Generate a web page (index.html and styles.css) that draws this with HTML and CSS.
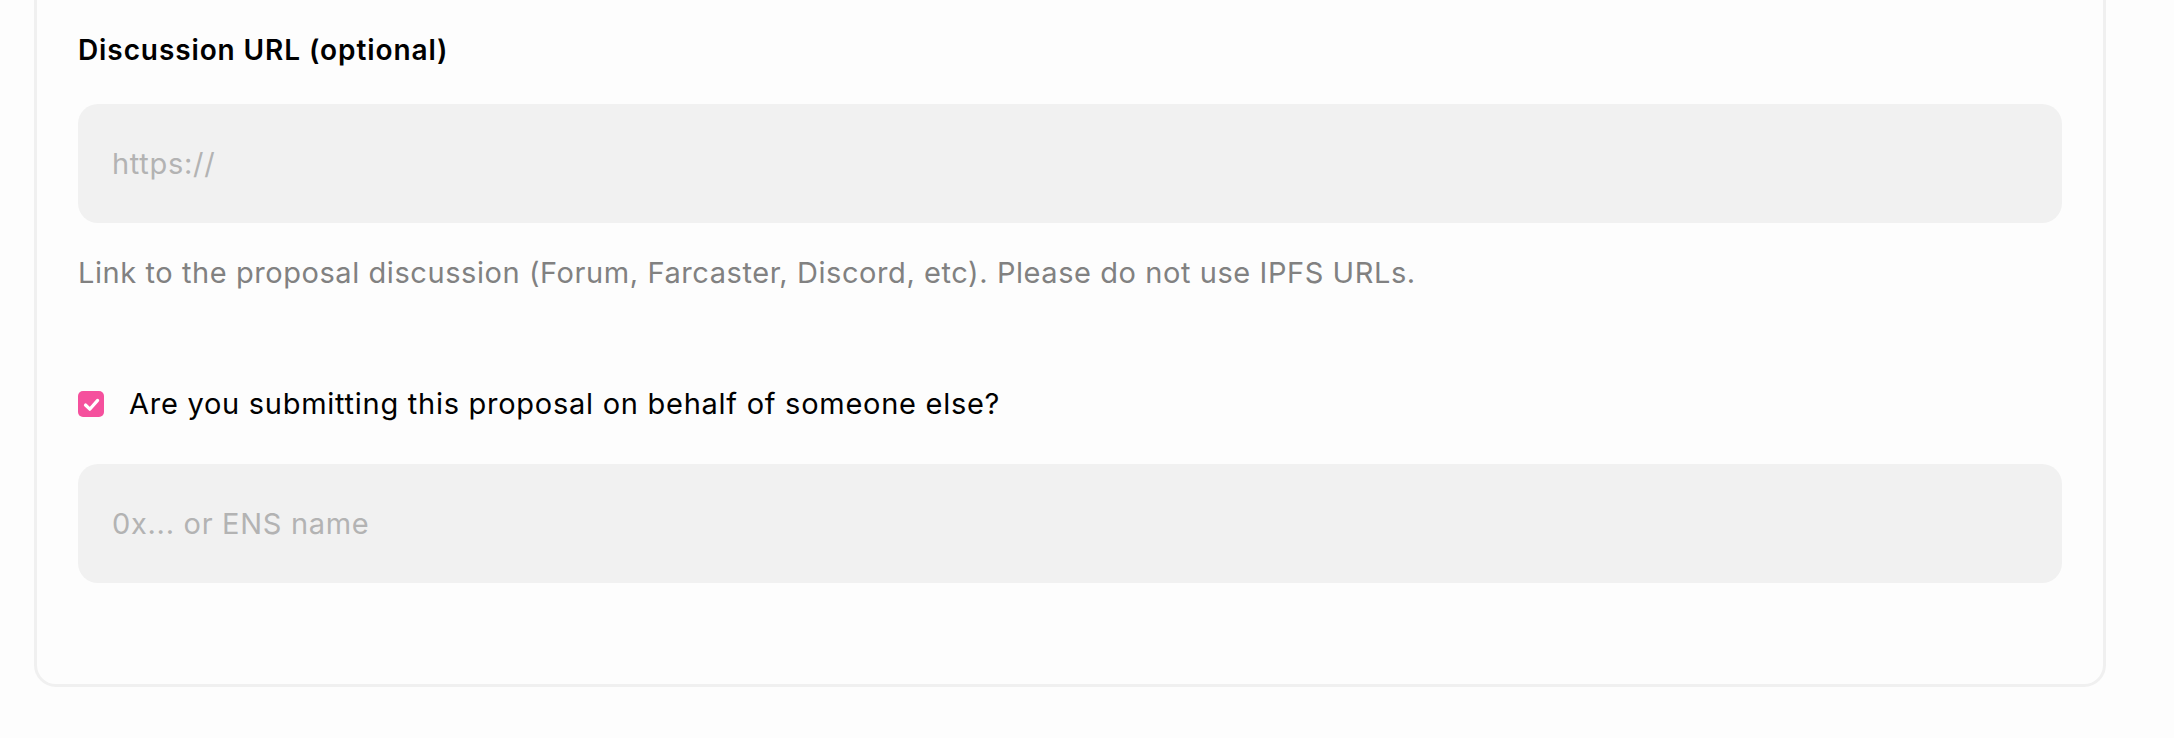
FILE: index.html
```html
<!DOCTYPE html>
<html lang="en">
<head>
<meta charset="utf-8">
<title>Discussion URL</title>
<link rel="stylesheet" href="styles.css">
</head>
<body>
<div class="card">
  <div class="field">
    <label class="field-label" for="discussion">Discussion URL (optional)</label>
    <input class="text-input" id="discussion" type="text" placeholder="https://">
    <p class="help">Link to the proposal discussion (Forum, Farcaster, Discord, etc). Please do not use IPFS URLs.</p>
  </div>
  <div class="behalf">
    <label class="check-row">
      <span class="checkbox">
        <svg viewBox="0 0 25 25" width="25" height="25" aria-hidden="true"><path d="M6.5 13 L10.8 17.2 L18.6 8.4" fill="none" stroke="#ffffff" stroke-width="3.2" stroke-linecap="round" stroke-linejoin="round"/></svg>
      </span>
      <span class="check-text">Are you submitting this proposal on behalf of someone else?</span>
    </label>
    <input class="text-input" type="text" placeholder="0x... or ENS name">
  </div>
</div>
</body>
</html>
```

FILE: styles.css
```css
* {
  box-sizing: border-box;
}

html, body {
  margin: 0;
  padding: 0;
  background: #fdfdfd;
  overflow: hidden;
}

body {
  font-family: "Inter", "Liberation Sans", sans-serif;
  color: #000000;
}

.card {
  margin: -43px 68px 0 34px;
  border: 3px solid #f0f0f0;
  border-radius: 22px;
  padding: 74px 41px 101px 41px;
  background: #fdfdfd;
}

.field {
  display: flex;
  flex-direction: column;
}

.field-label {
  font-size: 28px;
  line-height: 32px;
  font-weight: 600;
  letter-spacing: 0.9px;
  color: #000000;
  margin-bottom: 38px;
}

.text-input {
  display: block;
  width: 100%;
  height: 119px;
  border: none;
  outline: none;
  border-radius: 20px;
  background: #f1f1f1;
  padding: 0 34px;
  font-family: "Inter", "Liberation Sans", sans-serif;
  font-size: 29px;
  letter-spacing: 0.7px;
  color: #000000;
}

.text-input::placeholder {
  color: #b3b3b3;
}

.help {
  margin: 30px 0 0 0;
  font-size: 29px;
  line-height: 40px;
  letter-spacing: 0.57px;
  color: #818181;
}

.behalf {
  margin-top: 91px;
  display: flex;
  flex-direction: column;
  gap: 40px;
}

.check-row {
  display: flex;
  align-items: center;
  gap: 25px;
  height: 40px;
  cursor: pointer;
}

.checkbox {
  width: 26px;
  height: 26px;
  border-radius: 5px;
  background: #f5509d;
  display: flex;
  align-items: center;
  justify-content: center;
  flex: none;
}

.checkbox svg {
  display: block;
}

.check-text {
  font-size: 29px;
  line-height: 40px;
  letter-spacing: 0.73px;
  color: #000000;
}
```
